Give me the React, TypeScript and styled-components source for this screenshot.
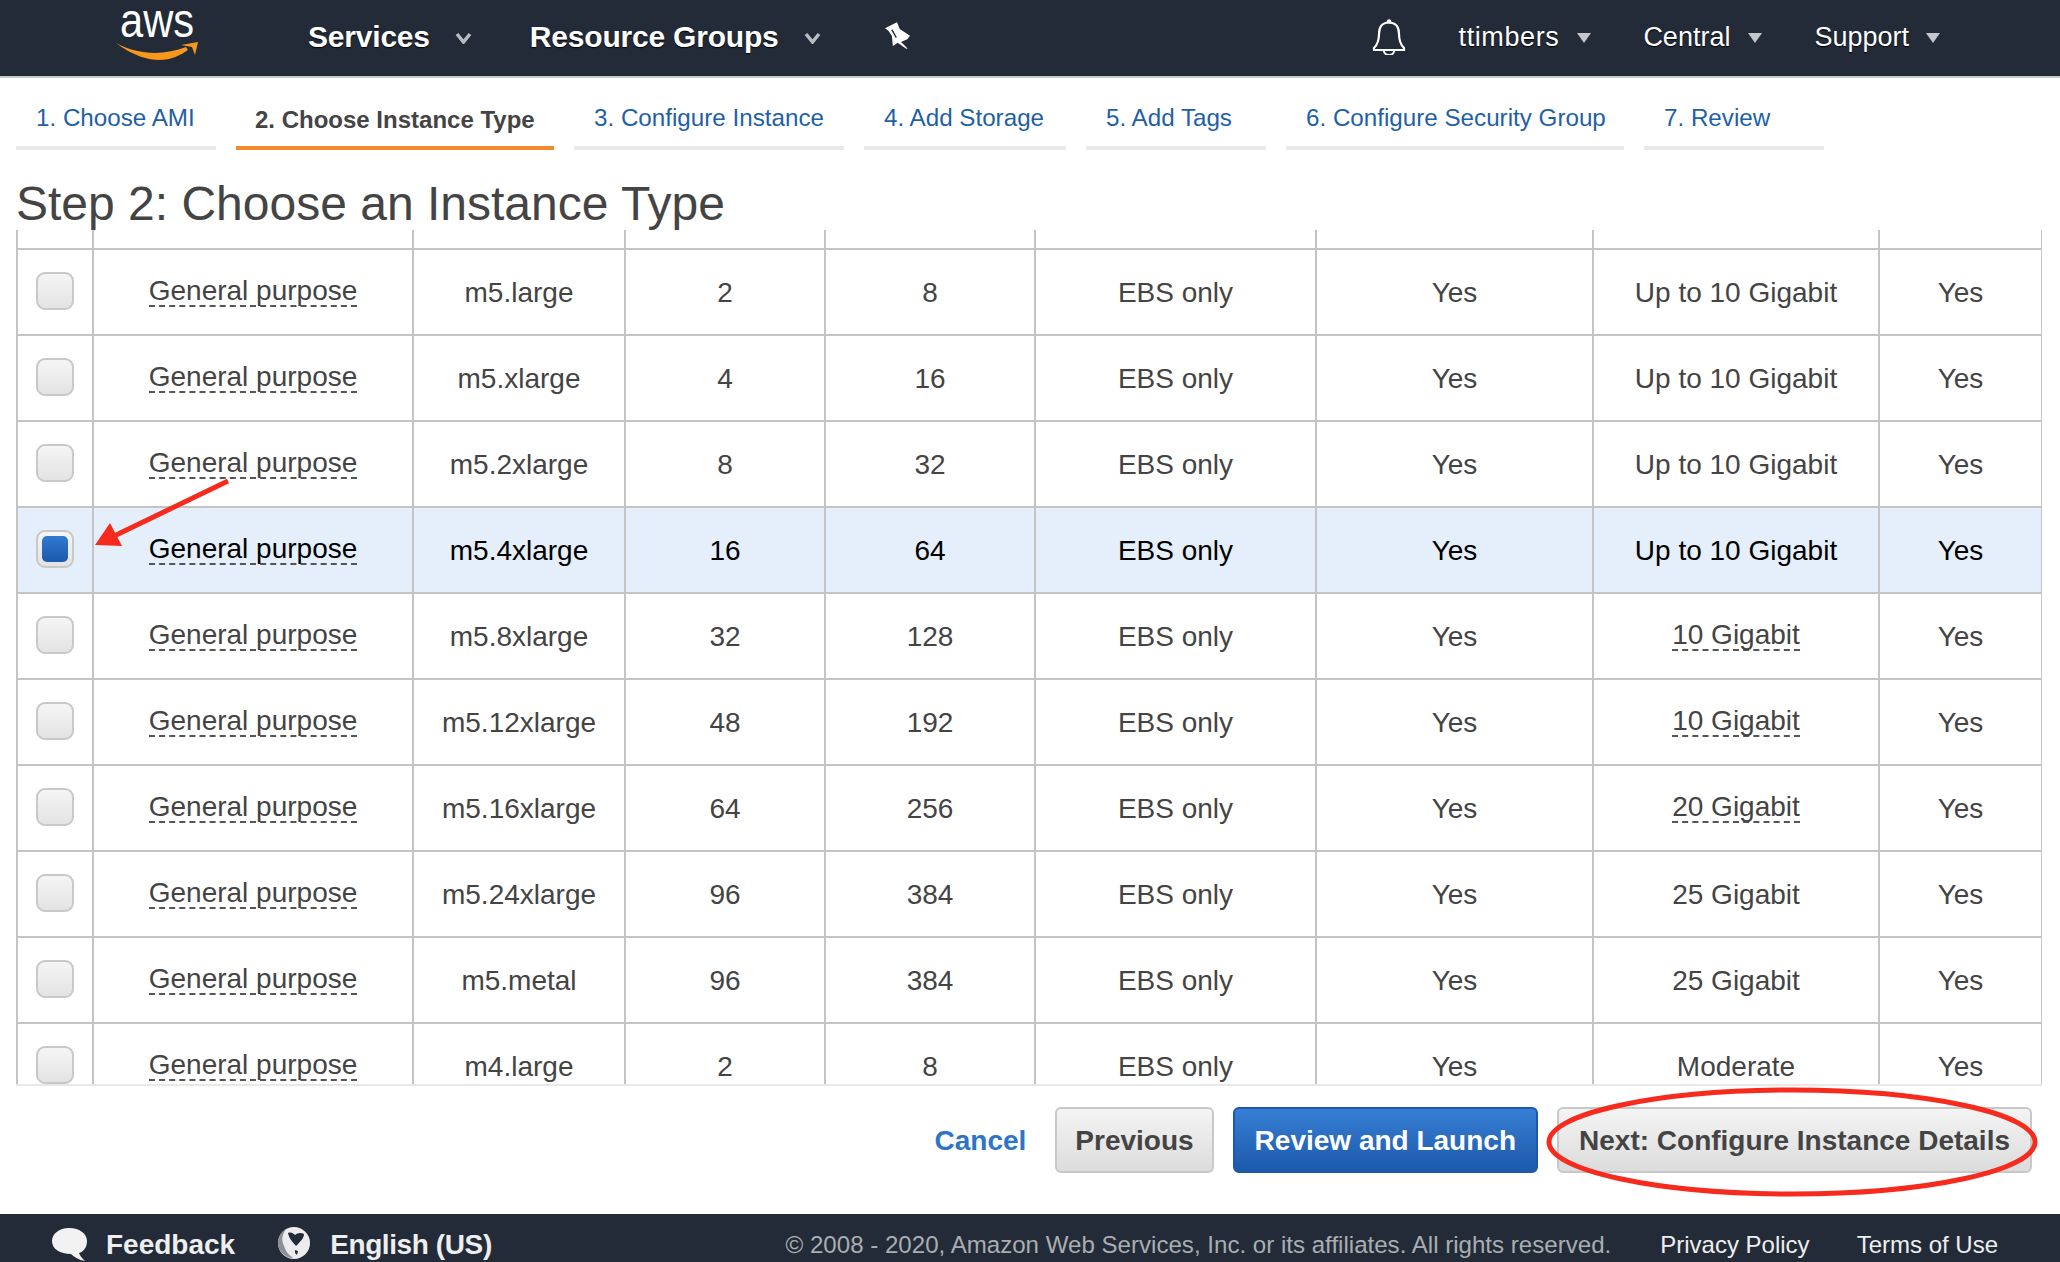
import React from "react";
import styled, { createGlobalStyle } from "styled-components";

const Global = createGlobalStyle`
  html, body { margin: 0; padding: 0; background: #fff; }
  body { font-family: "Liberation Sans", Arial, sans-serif; color: #444; }
`;
const Page = styled.div`
  position: relative; width: 2060px; height: 1262px; overflow: hidden;
  display: flex; flex-direction: column;
`;
const Header = styled.header`
  height: 78px; box-sizing: border-box; background: #232b39; border-bottom: 2px solid #c9c9cc;
  display: flex; align-items: center; color: #fff; flex: none;
`;
const Logo = styled.svg`width: 84px; height: 76px; margin-left: 115px; flex: none;`;
const NavBold = styled.span`
  font-size: 30px; font-weight: 700; letter-spacing: -0.2px; text-shadow: 0 1px 1px #000; margin-top: -2px;
`;
const NavItem = styled.div<{ $gap: number; $left: number }>`
  display: flex; align-items: center; gap: ${p => p.$gap}px; margin-left: ${p => p.$left}px;
`;
const Caret = styled.svg`width: 17px; height: 12px; flex: none;`;
const SmallCaret = styled.svg`width: 14px; height: 10px; flex: none;`;
const Pin = styled.svg`width: 25px; height: 27px; margin-left: 64px; margin-top: -6px; flex: none;`;
const Bell = styled.svg`width: 34px; height: 36px; margin-left: auto; margin-top: -2px; flex: none;`;
const NavText = styled.span<{ $ls?: number }>`
  font-size: 27px; letter-spacing: ${p => p.$ls ?? 0}px; text-shadow: 0 1px 1px #000; margin-top: -2px;
`;
const Tabs = styled.nav`display: flex; gap: 20px; margin: 0 0 0 16px; height: 72px; flex: none;`;
const Tab = styled.div<{ $active?: boolean; $w: number }>`
  width: ${p => p.$w}px; box-sizing: border-box; flex: none;
  border-bottom: 4px solid ${p => (p.$active ? "#f58a2c" : "#e9e9e9")};
  padding: ${p => (p.$active ? "28px" : "26px")} 0 0 ${p => (p.$active ? 19 : 20)}px;
  line-height: 28px; white-space: nowrap;
  font-weight: ${p => (p.$active ? 700 : 400)};
  font-size: ${p => (p.$active ? "24px" : "24.2px")};
  color: ${p => (p.$active ? "#444" : "#1f5fa8")};
`;
const Title = styled.h1`
  margin: 0 0 0 16px; height: 80px; box-sizing: border-box; padding-top: 29px; flex: none;
  font-weight: 400; font-size: 48px; line-height: 50px; color: #444; white-space: nowrap;
`;
const Scroller = styled.div`
  margin-left: 16px; width: 2026px; height: 856px; flex: none; overflow: hidden;
  border-bottom: 2px solid #e8e8e8; box-sizing: border-box;
`;
const Grid = styled.table`
  border-collapse: collapse; table-layout: fixed; width: 2025px; font-size: 28px;
`;
const Stub = styled.tr`
  height: 19px; td { padding: 0; border: 2px solid #c4c4c4; border-top: none; }
`;
const Row = styled.tr<{ $sel?: boolean }>`
  height: 86px; background: ${p => (p.$sel ? "#e4effb" : "#fff")};
  color: ${p => (p.$sel ? "#000" : "#444")};
`;
const Cell = styled.td`
  border: 2px solid #c4c4c4; padding: 2px 0 0; text-align: center; vertical-align: middle; white-space: nowrap;
`;
const Hint = styled.span`
  display: inline-block; line-height: 28px; border-bottom: 2px dashed #555; position: relative; top: -2px;
`;
const Check = styled.span<{ $on?: boolean }>`
  display: flex; align-items: center; justify-content: center; box-sizing: border-box;
  width: 38px; height: 38px; margin: -4px 0 0 18px; border: 2px solid #c8c8c8; border-radius: 9px;
  background: linear-gradient(#f5f5f5, #e3e3e3);
  &::after {
    content: ""; display: ${p => (p.$on ? "block" : "none")}; width: 26px; height: 26px; border-radius: 5px;
    background: linear-gradient(#3079d2, #1d59ab);
  }
`;
const Actions = styled.div`
  height: 128px; flex: none; display: flex; align-items: center; justify-content: flex-end;
  padding: 0 28px 20px 0; gap: 19px; box-sizing: border-box;
`;
const Cancel = styled.span`font-size: 28px; font-weight: 700; color: #2f74c8; margin: 2px 10px 0 0;`;
const Btn = styled.div<{ $primary?: boolean; $pad?: number }>`
  height: 66px; box-sizing: border-box; display: flex; align-items: center; border-radius: 6px;
  padding: 2px ${p => p.$pad ?? 20}px 0;
  font-size: 28px; font-weight: 700; white-space: nowrap;
  border: 2px solid ${p => (p.$primary ? "#1d59ab" : "#c8c8c8")};
  color: ${p => (p.$primary ? "#fff" : "#444")};
  background: ${p => (p.$primary ? "linear-gradient(#367fd4, #1d59ab)" : "linear-gradient(#f4f4f4, #dcdcdc)")};
`;
const Footer = styled.footer`
  height: 48px; box-sizing: border-box; padding-top: 14px; flex: none; background: #232b39; color: #fff;
  display: flex; align-items: center; line-height: 34px;
`;
const FootBold = styled.span<{ $ls?: number }>`
  font-size: 28px; font-weight: 700; color: #eee; letter-spacing: ${p => p.$ls ?? 0}px;
`;
const Bubble = styled.svg`width: 35px; height: 33px; margin: -2px 19px 0 52px; flex: none;`;
const Globe = styled.svg`width: 34px; height: 34px; margin: -5px 19px 0 42px; flex: none;`;
const Copy = styled.span`font-size: 24.1px; color: #a9aeb0; margin-left: auto;`;
const FootLink = styled.span<{ $left: number }>`font-size: 24px; color: #eee; margin-left: ${p => p.$left}px;`;
const Marks = styled.svg`position: absolute; left: 0; top: 0; pointer-events: none;`;

type R = [string, number, number, string];
const rows: R[] = [
  ["m5.large", 2, 8, "Up to 10 Gigabit"],
  ["m5.xlarge", 4, 16, "Up to 10 Gigabit"],
  ["m5.2xlarge", 8, 32, "Up to 10 Gigabit"],
  ["m5.4xlarge", 16, 64, "Up to 10 Gigabit"],
  ["m5.8xlarge", 32, 128, "10 Gigabit"],
  ["m5.12xlarge", 48, 192, "10 Gigabit"],
  ["m5.16xlarge", 64, 256, "20 Gigabit"],
  ["m5.24xlarge", 96, 384, "25 Gigabit"],
  ["m5.metal", 96, 384, "25 Gigabit"],
  ["m4.large", 2, 8, "Moderate"],
];
const widths = [76, 320, 212, 200, 210, 281, 277, 286, 163];
const hinted = new Set(["10 Gigabit", "20 Gigabit"]);
const tabs: [string, number][] = [
  ["1. Choose AMI", 200], ["2. Choose Instance Type", 318], ["3. Configure Instance", 270], ["4. Add Storage", 202],
  ["5. Add Tags", 180], ["6. Configure Security Group", 338], ["7. Review", 180],
];

const CaretIcon = () => (
  <Caret viewBox="0 0 17 12"><path d="M2 2 L8.5 10 L15 2" fill="none" stroke="#b8bcc2" strokeWidth="3.5" /></Caret>
);
const SmallCaretIcon = () => (
  <SmallCaret viewBox="0 0 14 10"><path d="M0 0 H14 L7 10 Z" fill="#c4c6ca" /></SmallCaret>
);

export default function App() {
  return (
    <Page>
      <Global />
      <Header>
        <Logo viewBox="0 0 84 76">
          <text x="5" y="37" fontFamily="'Liberation Sans', sans-serif" fontSize="48" fill="#fff" textLength="74" lengthAdjust="spacingAndGlyphs">aws</text>
          <path d="M1 43 C18 56 34 60 44 60 C56 60 66 55 73 50 L71 47 C50 55 25 56 1 43 Z" fill="#f7981d" />
          <path d="M66 45 L83 42 L80 55 L77 47 Z" fill="#f7981d" />
        </Logo>
        <NavItem $gap={25} $left={109}><NavBold>Services</NavBold><CaretIcon /></NavItem>
        <NavItem $gap={25} $left={58}><NavBold>Resource Groups</NavBold><CaretIcon /></NavItem>
        <Pin viewBox="75 40 73 78">
          <path d="M75 58 L110 40 L118 60 L148 80 L140 90 L122 98 L141 117 L137 118 L112 100 L98 110 L95 80 L85 65 Z" fill="#fff" />
          <path d="M95 62 L108 85" stroke="#232b39" strokeWidth="4" />
        </Pin>
        <Bell viewBox="0 0 34 36">
          <circle cx="17" cy="2.4" r="2.2" fill="#fff" />
          <path d="M17 3.5 C10 3.5 7 8 7 15 C7 22 5 26 2 29 V31 H32 V29 C29 26 27 22 27 15 C27 8 24 3.5 17 3.5 Z" fill="none" stroke="#fff" strokeWidth="2.2" />
          <path d="M12 32 a5 4 0 0 0 10 0" fill="none" stroke="#fff" strokeWidth="2" />
        </Bell>
        <NavItem $gap={18} $left={53}><NavText $ls={0.6}>ttimbers</NavText><SmallCaretIcon /></NavItem>
        <NavItem $gap={18} $left={52}><NavText>Central</NavText><SmallCaretIcon /></NavItem>
        <NavItem $gap={17} $left={52}><NavText>Support</NavText><SmallCaretIcon /></NavItem>
        <NavItem $gap={0} $left={120} />
      </Header>
      <Tabs>
        {tabs.map(([t, w], i) => (
          <Tab key={t} $w={w} $active={i === 1}>{t}</Tab>
        ))}
      </Tabs>
      <Title>Step 2: Choose an Instance Type</Title>
      <Scroller>
        <Grid>
          <colgroup>{widths.map((w, i) => <col key={i} style={{ width: w }} />)}</colgroup>
          <tbody>
            <Stub>{widths.map((_, i) => <td key={i} />)}</Stub>
            {rows.map((r, i) => (
              <Row key={r[0]} $sel={i === 3}>
                <Cell><Check $on={i === 3} /></Cell>
                <Cell><Hint>General purpose</Hint></Cell>
                <Cell>{r[0]}</Cell>
                <Cell>{r[1]}</Cell>
                <Cell>{r[2]}</Cell>
                <Cell>EBS only</Cell>
                <Cell>Yes</Cell>
                <Cell>{hinted.has(r[3]) ? <Hint>{r[3]}</Hint> : r[3]}</Cell>
                <Cell>Yes</Cell>
              </Row>
            ))}
          </tbody>
        </Grid>
      </Scroller>
      <Actions>
        <Cancel>Cancel</Cancel>
        <Btn $pad={18}>Previous</Btn>
        <Btn $primary>Review and Launch</Btn>
        <Btn>Next: Configure Instance Details</Btn>
      </Actions>
      <Footer>
        <Bubble viewBox="0 0 35 33">
          <path d="M17 0 C28 0 35 6 35 13 C35 20 31 24 27 25 C28 28 30 30 33 33 C27 32 22 29 19 26 C8 26 0 21 0 13 C0 6 7 0 17 0 Z" fill="#f2f2f2" />
        </Bubble>
        <FootBold>Feedback</FootBold>
        <Globe viewBox="0 0 34 34">
          <circle cx="17" cy="17" r="16" fill="#ececec" />
          <path d="M1 17 C1 10 5 5 10 2 C5 8 4 14 7 20 C9 26 12 29 16 32 C8 32 1 25 1 17 Z" fill="#8b8f96" />
          <path d="M11 7 C14 6 16 7 18 9 C20 7 24 6 27 8 C27 12 24 15 19 20 C16 16 12 13 11 7 Z M18 24 L21 25 L20 29 L18 27 Z" fill="#232b39" />
        </Globe>
        <FootBold $ls={-0.4}>English (US)</FootBold>
        <Copy>© 2008 - 2020, Amazon Web Services, Inc. or its affiliates. All rights reserved.</Copy>
        <FootLink $left={49}>Privacy Policy</FootLink>
        <FootLink $left={47}>Terms of Use</FootLink>
        <FootLink $left={62} />
      </Footer>
      <Marks width="2060" height="1262">
        <path d="M228 481 L112 537" stroke="#f62b1e" strokeWidth="5" />
        <path d="M95 545 L110 523 L122 546 Z" fill="#f62b1e" />
        <ellipse cx="1792" cy="1142" rx="243" ry="52" fill="none" stroke="#f62b1e" strokeWidth="5" />
      </Marks>
    </Page>
  );
}
